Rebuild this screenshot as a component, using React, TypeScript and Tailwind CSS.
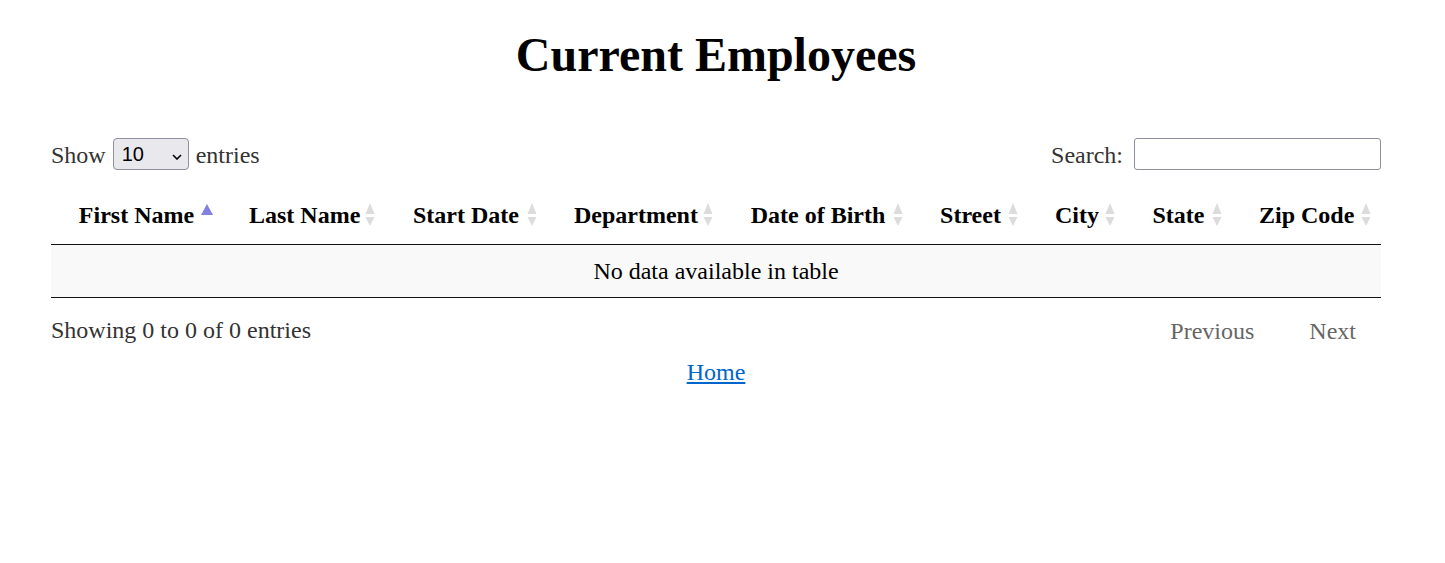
import { useState } from "react";

const columns = [
  { label: "First Name", w: "w-[171px]", active: true },
  { label: "Last Name", w: "w-[163px]" },
  { label: "Start Date", w: "w-[162px]" },
  { label: "Department", w: "w-[176px]" },
  { label: "Date of Birth", w: "w-[190px]" },
  { label: "Street", w: "w-[115px]" },
  { label: "City", w: "w-[97px]" },
  { label: "State", w: "w-[107px]" },
  { label: "Zip Code", w: "w-[149px]" },
];

const SortIcon = ({ active }: { active?: boolean }) => (
  <svg
    width="12"
    height="24"
    viewBox="0 0 12 24"
    className="absolute right-[9px] top-[calc(50%-12px)]"
  >
    {active ? (
      <polygon points="6,1 12,12 0,12" fill="#8181e0" />
    ) : (
      <>
        <polygon points="6,0 10.5,11 1.5,11" fill="#dcdcdc" />
        <polygon points="1.5,14 10.5,14 6,23" fill="#dcdcdc" />
      </>
    )}
  </svg>
);

const App = () => {
  const [size, setSize] = useState("10");
  const [query, setQuery] = useState("");

  return (
    <div className="min-h-screen bg-white pt-[27px] font-['Liberation_Serif',serif] text-black">
      <div className="ml-[51px] w-[1330px]">
        <h1 className="mb-[55px] text-center text-[48px] leading-[55px] font-bold">
          Current Employees
        </h1>

        <div className="flex h-[34px] items-center justify-between text-[24px] leading-[27.6px] text-[#333]">
          <label className="flex items-center">
            <span className="mt-[4px]">Show</span>
            <span className="relative mx-[7px] inline-block">
              <select
                value={size}
                onChange={(e) => setSize(e.target.value)}
                className="h-[32px] w-[76px] appearance-none rounded-[4px] border border-[#8f8f9d] bg-[#e9e9ed] pl-[8px] font-['Liberation_Sans',sans-serif] text-[20px] leading-[30px] text-black outline-none"
              >
                <option value="10">10</option>
                <option value="25">25</option>
                <option value="50">50</option>
                <option value="100">100</option>
              </select>
              <svg
                width="10"
                height="6"
                viewBox="0 0 10 6"
                className="pointer-events-none absolute left-[59px] top-[16px]"
              >
                <path d="M1 1 L5 5 L9 1" fill="none" stroke="#000" strokeWidth="1.6" />
              </svg>
            </span>
            <span className="mt-[4px]">entries</span>
          </label>

          <label className="flex items-center">
            <span className="mt-[4px]">Search:</span>
            <input
              value={query}
              onChange={(e) => setQuery(e.target.value)}
              className="ml-[11px] h-[32px] w-[247px] rounded-[3px] border border-[#8f8f9d] bg-white px-[4px] text-[20px] outline-none"
            />
          </label>
        </div>

        <table className="mt-[15px] w-[1330px] table-fixed border-collapse text-[24px] leading-[27.6px]">
          <thead>
            <tr>
              {columns.map((c) => (
                <th
                  key={c.label}
                  className={`relative ${c.w} border-b border-[#111] px-[27px] pt-[16px] pb-[14px] text-center font-bold whitespace-nowrap`}
                >
                  {c.label}
                  <SortIcon active={c.active} />
                </th>
              ))}
            </tr>
          </thead>
          <tbody>
            <tr className="bg-[#f9f9f9]">
              <td colSpan={9} className="border-b border-[#111] px-[15px] pt-[13px] pb-[12px] text-center">
                No data available in table
              </td>
            </tr>
          </tbody>
        </table>

        <div className="flex items-start justify-between text-[24px] leading-[27.6px]">
          <div className="pt-[19px] text-[#333]">Showing 0 to 0 of 0 entries</div>
          <div className="flex gap-[5px] pt-[7px] text-[#666]">
            <span className="border border-transparent px-[24px] py-[12px]">Previous</span>
            <span className="border border-transparent px-[24px] py-[12px]">Next</span>
          </div>
        </div>

        <div className="text-center text-[24px] leading-[27.6px]">
          <a href="#" className="text-[#0066cc] underline">
            Home
          </a>
        </div>
      </div>
    </div>
  );
};

export default App;
